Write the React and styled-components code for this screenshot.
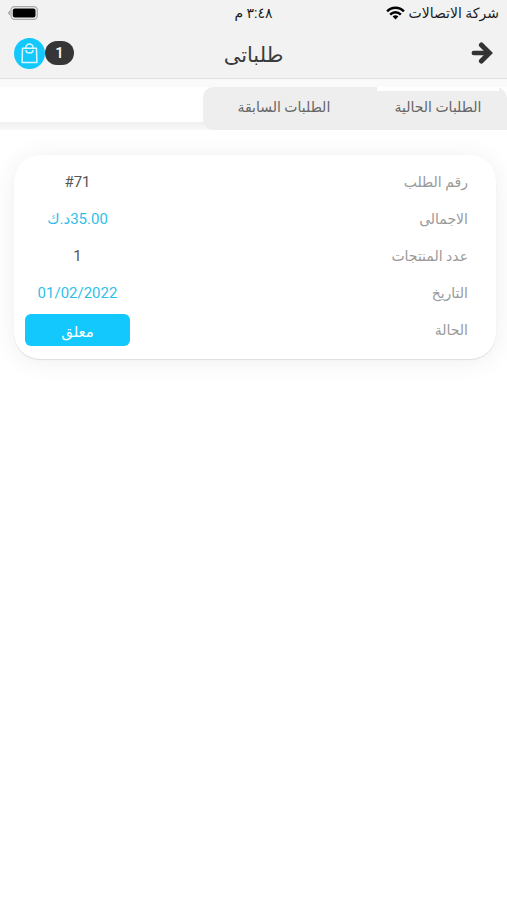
import React, {useState} from 'react';
import styled, {createGlobalStyle} from 'styled-components';

const GlobalStyle = createGlobalStyle`
    * {
        box-sizing: border-box;
    }

    body {
        margin: 0;
        background-color: #fff;
        font-family: Roboto, "DejaVu Sans", sans-serif;
        color: #3c3c3c;
    }

    button {
        padding: 0;
        border: none;
        background: none;
        font-family: inherit;
        color: inherit;
        cursor: pointer;
    }
`;

const Header = styled.header`
    background-color: #f2f2f2;
    border-bottom: 1px solid #e0e0e0;
`;

const StatusBar = styled.div`
    display: grid;
    grid-template-columns: 1fr auto 1fr;
    align-items: center;
    height: 26px;
    padding: 0 8px;
    font-size: 14px;
    color: #1c1c1c;
`;

const Carrier = styled.div`
    display: flex;
    align-items: center;
    gap: 4px;
    white-space: nowrap;
`;

const BatterySlot = styled.div`
    display: flex;
    justify-content: flex-end;
`;

const NavBar = styled.div`
    display: grid;
    grid-template-columns: 1fr auto 1fr;
    align-items: center;
    height: 52px;
    padding: 2px 14px 0;
`;

const BackButton = styled.button`
    display: flex;
    justify-self: start;
`;

const Title = styled.h1`
    margin: 0;
    padding-top: 4px;
    font-size: 21px;
    font-weight: 400;
    line-height: 28px;
`;

const CartButton = styled.button`
    display: flex;
    align-items: center;
    justify-self: end;
`;

const CartCount = styled.span`
    width: 29px;
    border-radius: 12px;
    background-color: #363636;
    color: #fff;
    font-size: 15px;
    font-weight: 500;
    line-height: 24px;
    text-align: center;
`;

const CartIcon = styled.span`
    display: flex;
    align-items: center;
    justify-content: center;
    width: 31px;
    height: 31px;
    border-radius: 50%;
    background-color: #12c8fc;
`;

const TabBar = styled.nav`
    padding-top: 8px;
    background-color: #fafafa;
`;

const TabStrip = styled.div`
    background: linear-gradient(#fff 35px, #f0f0f0 35px, #f8f8f8);
`;

const TabList = styled.div`
    display: flex;
    gap: 32px;
    width: 60%;
    height: 43px;
    padding: 0 8px 0 20px;
    border-radius: 10px 12px 0 10px;
    background-color: #eee;
`;

const Tab = styled.button`
    flex: 1 1 0;
    padding-bottom: 8px;
    border-top: 4px solid ${props => (props.$active ? '#fff' : 'transparent')};
    font-size: 14px;
    line-height: 28px;
    white-space: nowrap;
    color: #666;
`;

const Orders = styled.main`
    padding: 25px 11px 24px 14px;
`;

const Card = styled.article`
    padding: 8px 28px 11px 11px;
    border-radius: 26px;
    background-color: #fff;
    box-shadow: 0 1px 1px rgba(0, 0, 0, 0.1), 0 2px 26px rgba(0, 0, 0, 0.07);
`;

const Details = styled.dl`
    margin: 0;
`;

const Row = styled.div`
    display: flex;
    align-items: center;
    justify-content: space-between;
    height: 37px;
`;

const Label = styled.dt`
    font-size: 14px;
    color: #999;
`;

const Value = styled.dd`
    width: 105px;
    margin: 0;
    font-size: 15px;
    text-align: center;
    color: ${props => (props.$accent ? '#2fbfe9' : '#555')};
`;

const StatusButton = styled.button`
    display: block;
    width: 100%;
    padding-top: 4px;
    border-radius: 6px;
    background-color: #12c8fc;
    color: #fff;
    font-size: 15px;
    line-height: 28px;
`;

const WifiIcon = () => (
    <svg width="19" height="14" viewBox="0 0 20 14" fill="none" stroke="#000" strokeWidth="2.6" aria-hidden="true">
        <path d="M1.2 5.2C6 .2 14 .2 18.800 5.200"/>
        <path d="M4.400 8.600c3.200-3.200 8-3.200 11.200 0"/>
        <path d="M7 10.600c1.800-1.500 4.200-1.500 6 0L10 13.800z" fill="#000" stroke="none"/>
    </svg>
);

const BatteryIcon = () => (
    <svg width="30" height="14" viewBox="0 0 30 14" aria-hidden="true">
        <path d="M2 4.800v4.400C.8 8.800.2 8 .2 7s.6-1.800 1.800-2.200z" fill="#aaa"/>
        <rect x="3" y=".7" width="26.300" height="12.600" rx="3.500" fill="#eee" stroke="#aaa" strokeWidth="1.300"/>
        <rect x="4.800" y="2.500" width="22.700" height="9" rx="2" fill="#000"/>
    </svg>
);

const ArrowIcon = () => (
    <svg width="22" height="22" viewBox="0 0 22 22" fill="none" stroke="#333" aria-hidden="true">
        <path d="M2.800 11H17" strokeWidth="4.500" strokeLinecap="round"/>
        <path d="M10.400 3L18.400 11l-8 8" strokeWidth="5" strokeLinecap="round"/>
    </svg>
);

const BagIcon = () => (
    <svg width="17" height="21" viewBox="0 0 17 21" fill="none" stroke="#d9f7ff" strokeWidth="1.500" strokeLinejoin="round" strokeLinecap="round" aria-hidden="true">
        <path d="M1.500 5.300h14l.4 14.200H1.100z"/>
        <path d="M4.900 5.300V4.500a3.600 3.600 0 0 1 7.200 0v.8"/>
        <path d="M5 7.500c.5 3.400 6.500 3.400 7 0"/>
    </svg>
);

const tabs = [
    {id: 'current', name: 'الطلبات الحالية'},
    {id: 'previous', name: 'الطلبات السابقة'},
];

const order = [
    {label: 'رقم الطلب', value: '#71'},
    {label: 'الاجمالى', value: '35.00د.ك', accent: true},
    {label: 'عدد المنتجات', value: '1'},
    {label: 'التاريخ', value: '01/02/2022', accent: true},
];

const App = () => {
    const [activeTab, setActiveTab] = useState('current');

    return (
        <div dir="rtl" lang="ar">
            <GlobalStyle/>
            <Header>
                <StatusBar>
                    <Carrier>
                        شركة الاتصالات
                        <WifiIcon/>
                    </Carrier>
                    <span>٣:٤٨ م</span>
                    <BatterySlot>
                        <BatteryIcon/>
                    </BatterySlot>
                </StatusBar>
                <NavBar>
                    <BackButton type="button" aria-label="رجوع">
                        <ArrowIcon/>
                    </BackButton>
                    <Title>طلباتى</Title>
                    <CartButton type="button">
                        <CartCount>1</CartCount>
                        <CartIcon>
                            <BagIcon/>
                        </CartIcon>
                    </CartButton>
                </NavBar>
            </Header>
            <TabBar>
                <TabStrip>
                    <TabList>
                        {tabs.map(tab => (
                            <Tab
                                key={tab.id}
                                type="button"
                                $active={activeTab === tab.id}
                                onClick={() => setActiveTab(tab.id)}
                            >
                                {tab.name}
                            </Tab>
                        ))}
                    </TabList>
                </TabStrip>
            </TabBar>
            <Orders>
                <Card>
                    <Details>
                        {order.map(item => (
                            <Row key={item.label}>
                                <Label>{item.label}</Label>
                                <Value $accent={item.accent}>{item.value}</Value>
                            </Row>
                        ))}
                        <Row>
                            <Label>الحالة</Label>
                            <Value>
                                <StatusButton type="button">معلق</StatusButton>
                            </Value>
                        </Row>
                    </Details>
                </Card>
            </Orders>
        </div>
    );
};

export default App;
